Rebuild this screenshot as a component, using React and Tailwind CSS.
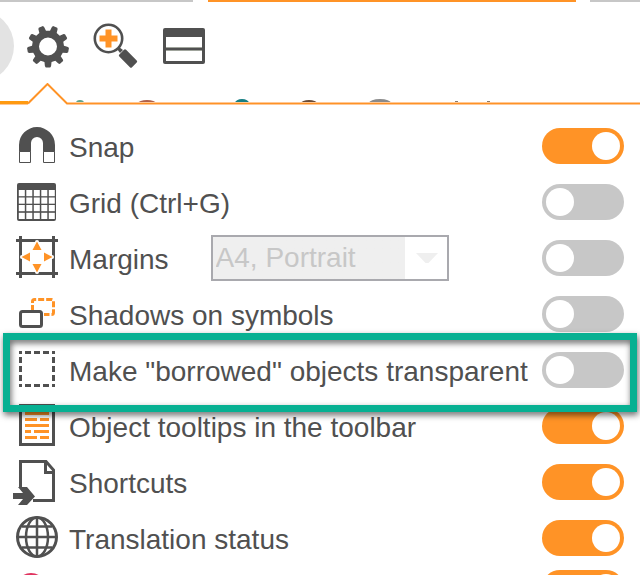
import React, { useState } from "react";

// Gear outline: `teeth` tapered teeth around a centre, with a round hole
const gearPath = (cx, cy, teeth, outer, inner) => {
  const step = (Math.PI * 2) / teeth;
  const pt = (r, a) =>
    `${(cx + r * Math.cos(a)).toFixed(2)} ${(cy + r * Math.sin(a)).toFixed(2)}`;
  const parts = [];
  for (let i = 0; i < teeth; i++) {
    const a = Math.PI / 2 + i * step;
    parts.push(
      `${pt(inner, a - step * 0.32)}L${pt(outer - 1, a - step * 0.22)}L${pt(outer, a - step * 0.15)}`,
      `${pt(outer, a + step * 0.15)}L${pt(outer - 1, a + step * 0.22)}L${pt(inner, a + step * 0.32)}`,
    );
  }
  return `M${parts.join("L")}Z`;
};

const GearIcon = () => (
  <svg width="42" height="42" viewBox="0 0 42 42" aria-hidden="true">
    <path
      fill="#505050"
      fillRule="evenodd"
      d={`${gearPath(21, 20.5, 9, 21, 16)}M12 20.5a9 9 0 1 0 18 0a9 9 0 1 0 -18 0Z`}
    />
  </svg>
);

const ZoomInIcon = () => (
  <svg width="46" height="46" viewBox="0 0 46 46" aria-hidden="true">
    <circle cx="15.5" cy="15.5" r="13.7" fill="#fff" stroke="#505050" strokeWidth="2.6" />
    <path d="M12.5 6.5h6v6h6v6h-6v6h-6v-6h-6v-6h6z" fill="#ff9326" />
    <path d="M24 26l2-2 4 3-3 3z" fill="#505050" />
    <rect x="-9" y="-4.8" width="18" height="9.6" rx="1.5" fill="#505050" transform="translate(35 35.5) rotate(45)" />
  </svg>
);

const PanelIcon = () => (
  <svg width="42" height="36" viewBox="0 0 42 36" aria-hidden="true">
    <rect width="42" height="36" rx="2" fill="#505050" />
    <path d="M3 9h36v10H3zM3 23h36v10H3z" fill="#fff" />
    <path d="M3 19h36v1H3z" fill="#a0a49c" />
    <path d="M3 22h36v1H3z" fill="#a0a49c" />
  </svg>
);

const Icon = ({ children }) => (
  <svg
    width="48"
    height="48"
    viewBox="0 0 48 48"
    fill="none"
    stroke="#505050"
    className="shrink-0"
    aria-hidden="true"
  >
    {children}
  </svg>
);

const SnapIcon = () => (
  <Icon>
    <path d="M6 30V23a18 18 0 0 1 36 0V30H30V21a6 6 0 0 0 -12 0V30z" fill="#505050" stroke="none" />
    <path d="M6.5 29.5h11v11h-11zM30.5 29.5h11v11h-11z" fill="#fff" />
  </Icon>
);

const GridIcon = () => (
  <Icon>
    <rect x="4" y="5" width="39" height="38" rx="2" fill="#505050" stroke="none" />
    <g fill="#fff" stroke="none">
      {[12, 19.5, 27, 34.8].map((y) =>
        [5.8, 13.3, 20.8, 28.3, 35.8].map((x) => (
          <rect key={`${x}-${y}`} x={x} y={y} width="6" height="6.2" />
        )),
      )}
    </g>
  </Icon>
);

const MarginsIcon = () => (
  <Icon>
    <path d="M7.5 2v42M40.5 2v42M3 6.5h42M3 39.5h42" strokeWidth="3" />
    <g fill="#fff" stroke="none">
      <circle cx="24" cy="8" r="2" />
      <circle cx="24" cy="38" r="2" />
      <circle cx="9" cy="23" r="2" />
      <circle cx="39" cy="23" r="2" />
    </g>
    <g fill="#ff9326" stroke="none">
      <path d="M24 7.5l4.5 8.5h-9z" />
      <path d="M24 38.5l4.5 -8.5h-9z" />
      <path d="M8.5 23l8.5 -4.5v9z" />
      <path d="M39.5 23l-8.5 -4.5v9z" />
    </g>
  </Icon>
);

const ShadowsIcon = () => (
  <Icon>
    <path d="M19.5 21V11.5q0-2 2-2h17q2 0 2 2v11q0 2-2 2H31" stroke="#ff9326" strokeWidth="3" strokeDasharray="6 2" />
    <rect x="7.5" y="21.5" width="21" height="15" rx="2" fill="#fff" strokeWidth="3" />
  </Icon>
);

const BorrowedIcon = () => (
  <Icon>
    <path
      d="M6 6.5H42M6 39.5H42"
      strokeWidth="3"
      strokeDasharray="3 3 6 3 6 3 6 3 3 0"
    />
    <path
      d="M7.5 5V41M40.5 5V41"
      strokeWidth="3"
      strokeDasharray="3 3 6 3 6 3 6 3 3 0"
    />
  </Icon>
);

const TooltipIcon = () => (
  <Icon>
    <rect x="7.5" y="3.5" width="33" height="39" fill="#fff" strokeWidth="3" />
    <path
      d="M12 11.5h24M12 17.5h12M27 17.5h9M12 23.5h24M12 29.5h6M21 29.5h15M12 35.5h12M27 35.5h9"
      stroke="#ff9326"
      strokeWidth="3"
    />
  </Icon>
);

const ShortcutsIcon = () => (
  <Icon>
    <path d="M7.5 29V3.5H33L40.5 12V42.5H20" strokeWidth="3" />
    <path d="M32.5 4v10.5H41" strokeWidth="3" />
    <path d="M5 29h9l8 9.5-8 8.5H5l5-6H0v-6h10z" fill="#505050" stroke="none" />
  </Icon>
);

const GlobeIcon = () => (
  <Icon>
    <circle cx="24" cy="23" r="19.5" strokeWidth="3" />
    <path d="M24 3v40M4 23h40M9 12.5h30M9 33.5h30" strokeWidth="2.5" />
    <ellipse cx="24" cy="23" rx="11" ry="19.5" strokeWidth="2.5" />
  </Icon>
);

const MoreIcon = () => (
  <Icon>
    <circle cx="18" cy="24" r="15" fill="#e0345f" stroke="none" />
  </Icon>
);

const SETTINGS = [
  { id: "snap", label: "Snap", icon: SnapIcon, on: true },
  { id: "grid", label: "Grid (Ctrl+G)", icon: GridIcon, on: false },
  { id: "margins", label: "Margins", icon: MarginsIcon, on: false, select: true },
  { id: "shadows", label: "Shadows on symbols", icon: ShadowsIcon, on: false },
  {
    id: "borrowed",
    label: 'Make "borrowed" objects transparent',
    icon: BorrowedIcon,
    on: false,
    highlight: true,
  },
  { id: "tooltips", label: "Object tooltips in the toolbar", icon: TooltipIcon, on: true },
  { id: "shortcuts", label: "Shortcuts", icon: ShortcutsIcon, on: true },
  { id: "translation", label: "Translation status", icon: GlobeIcon, on: true },
];

const Toggle = ({ id, checked, onChange, label }) => (
  <input
    id={id}
    type="checkbox"
    role="switch"
    aria-label={label}
    checked={checked}
    onChange={onChange}
    className="flex h-9 w-[82px] shrink-0 cursor-pointer appearance-none items-center rounded-full bg-[#c7c7c7] px-1 before:size-7 before:rounded-full before:bg-white checked:justify-end checked:bg-[#ff9326]"
  />
);

const PageSelect = () => (
  <div className="relative ml-[42px] h-[46px] w-[238px] shrink-0">
    <select
      disabled
      aria-label="Page format"
      className="h-full w-full appearance-none border-2 border-[#a9a9ae] bg-linear-to-r from-[#efefef] from-[192px] to-white to-[192px] pl-[3px] text-[28px] text-[#c7c7c7] opacity-100"
    >
      <option>A4, Portrait</option>
    </select>
    <svg
      width="22"
      height="10"
      viewBox="0 0 22 10"
      className="pointer-events-none absolute top-[18px] right-[11px]"
      aria-hidden="true"
    >
      <path d="M0 0h22L12.5 10h-3z" fill="#efefef" />
    </svg>
  </div>
);

const SettingRow = ({ setting, checked, onToggle }) => {
  const RowIcon = setting.icon;
  return (
    <li className="relative flex h-14 items-center">
      <RowIcon />
      <label
        htmlFor={setting.id}
        className="ml-2 cursor-pointer pt-1 text-[28px] leading-8 whitespace-nowrap"
      >
        {setting.label}
      </label>
      {setting.select && <PageSelect />}
      <div className="ml-auto">
        <Toggle id={setting.id} checked={checked} onChange={onToggle} />
      </div>
      {setting.highlight && (
        <div className="pointer-events-none absolute -top-[9px] -right-[13px] -bottom-[14px] -left-[10px] z-10 border-[7px] border-[#07b092] drop-shadow-[1px_3px_3px_rgba(0,0,0,0.6)]" />
      )}
    </li>
  );
};

const App = () => {
  const [values, setValues] = useState(
    Object.fromEntries(SETTINGS.map((s) => [s.id, s.on])),
  );
  const [more, setMore] = useState(true);

  const toggle = (id) => setValues((prev) => ({ ...prev, [id]: !prev[id] }));

  return (
    <div className="h-screen overflow-hidden bg-white font-['Liberation_Sans',Arial,sans-serif] text-[#505050]">
      {/* Bottom edge of the tab strip */}
      <div className="flex h-0.5">
        <div className="w-[193px] bg-[#c7c7c7]" />
        <div className="ml-[15px] w-[368px] bg-[#ff9326]" />
        <div className="ml-[14px] flex-1 bg-[#c7c7c7]" />
      </div>

      {/* Toolbar */}
      <div className="flex h-[81px] items-start pt-2">
        <button
          className="-ml-[58px] size-[72px] shrink-0 rounded-full bg-[#e3e3e3]"
          aria-label="Previous"
        />
        <button className="mt-4 ml-[13px] cursor-pointer" aria-label="Settings">
          <GearIcon />
        </button>
        <button className="mt-[13px] ml-6 cursor-pointer" aria-label="Zoom in">
          <ZoomInIcon />
        </button>
        <button className="mt-[18px] ml-6 cursor-pointer" aria-label="Panels">
          <PanelIcon />
        </button>
      </div>

      {/* Pointer of the menu and its top edge, tips of the icons underneath */}
      <div className="relative flex items-end">
        <svg
          width="500"
          height="4"
          viewBox="0 0 500 4"
          className="absolute bottom-[2px] left-0"
          aria-hidden="true"
        >
          <ellipse cx="80" cy="4" rx="4" ry="3" fill="#5fa38c" />
          <ellipse cx="147" cy="4" rx="9" ry="3" fill="#b0604a" />
          <ellipse cx="242" cy="4" rx="7" ry="4" fill="#177f83" />
          <ellipse cx="309" cy="4" rx="8" ry="3" fill="#6a4a35" />
          <ellipse cx="380" cy="4" rx="11" ry="4" fill="#8a8a8a" />
          <path d="M455 2h3v2h-3zM487 2h3v2h-3z" fill="#8a7a6a" />
        </svg>
        <div className="relative h-1 w-7 border-b border-[#ffc896] bg-[#ff9a10]" />
        <svg width="40" height="22" viewBox="0 0 40 22" className="relative" aria-hidden="true">
          <path d="M0 20.5L19.5 1L39 20.5H40" fill="#fff" stroke="#ff9326" strokeWidth="2" />
        </svg>
        <div className="relative h-[3px] flex-1 border-y border-[#ffc896] bg-[#ff9326]" />
      </div>

      <ul className="bg-white pt-[13px] pr-4 pl-[13px]">
        {SETTINGS.map((setting) => (
          <SettingRow
            key={setting.id}
            setting={setting}
            checked={values[setting.id]}
            onToggle={() => toggle(setting.id)}
          />
        ))}
        <li className="flex h-11 items-center">
          <MoreIcon />
          <div className="ml-auto">
            <Toggle
              id="more"
              label="More"
              checked={more}
              onChange={() => setMore(!more)}
            />
          </div>
        </li>
      </ul>
    </div>
  );
};

export default App;
